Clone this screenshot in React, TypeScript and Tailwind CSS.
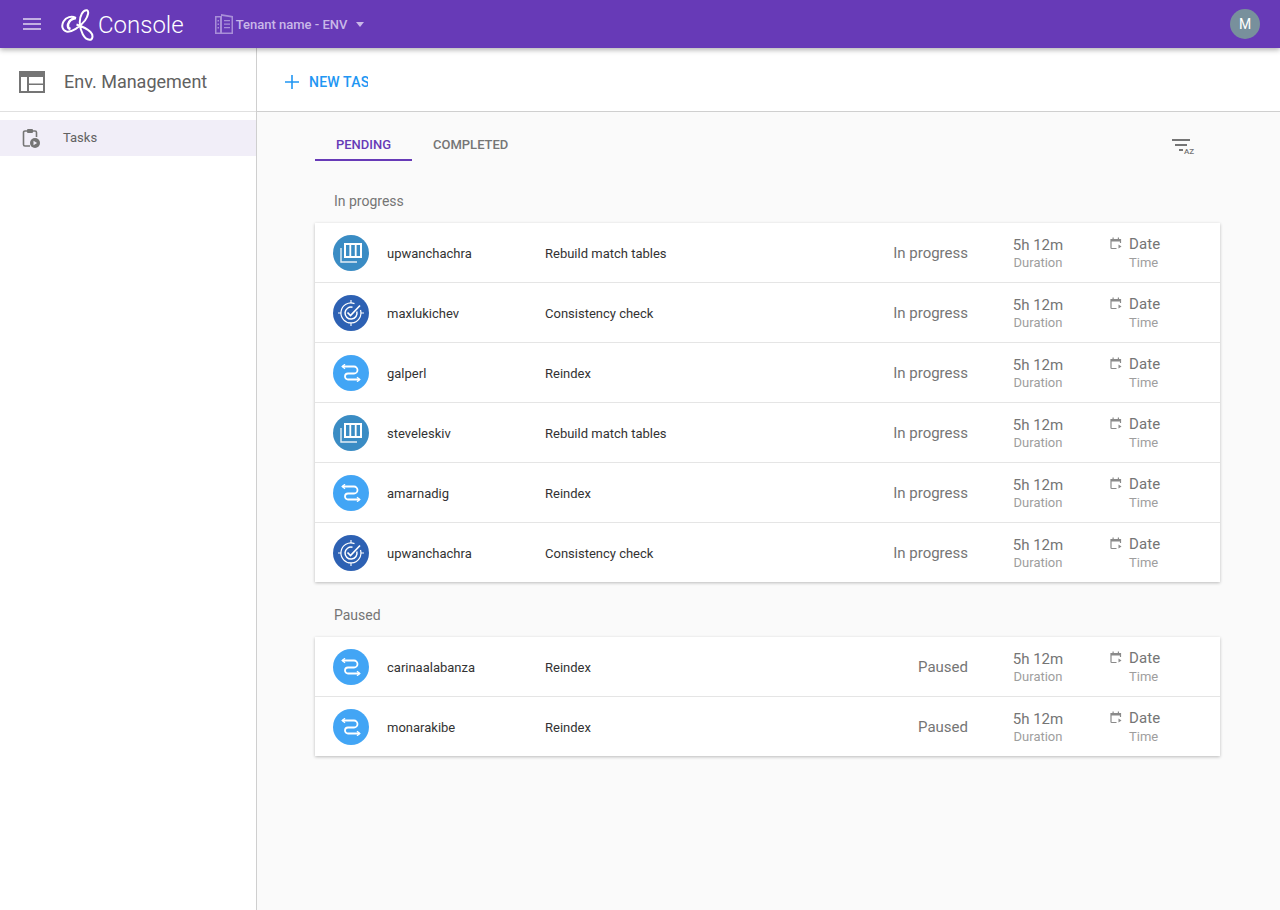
import React from "react";

const Menu = () => (
  <svg width="18" height="12" viewBox="0 0 18 12" className="text-[#c3b0e2]">
    <path d="M0 0h18v2H0zM0 5h18v2H0zM0 10h18v2H0z" fill="currentColor" />
  </svg>
);

const Logo = () => (
  <svg width="34" height="32" viewBox="0 0 34 32" fill="none" stroke="white" strokeWidth="2">
    <path d="M15 9C10.500 6.500 5 8 2.500 12.500C0 17 1.500 21.500 5.500 22.500C10.500 23.500 19 18 24 11.500C27.500 6.500 28 2 26 1.200C22 .5 18.500 7 18.800 14C19.200 22 23 30.500 28.500 30.800C32 30.800 32.500 26 29.500 23C26.500 20 20 17 15.500 15.500" />
    <path d="M15 9C11.500 9.500 8 11.500 7 15.500C6.500 18 7.500 19.500 9.500 20" strokeWidth="2.500" />
  </svg>
);

const Building = () => (
  <svg width="18" height="20" viewBox="0 0 18 20" className="text-[#a88ed8]">
    <path
      fill="currentColor"
      fillRule="evenodd"
      d="M0 2h6V0l12 2v18H0zM1.500 3.500v15H5v-15zM7 2v16.500h9.500V3.500zM2.500 6H4v1.500H2.500zM2.500 9.500H4V11H2.500zM2.500 13H4v1.500H2.500zM9 6h6v1.200H9zM9 9.500h6v1.200H9zM9 13h6v1.200H9z"
    />
  </svg>
);

const Layout = () => (
  <svg width="26" height="22" viewBox="0 0 26 22">
    <path
      fill="#757575"
      fillRule="evenodd"
      d="M0 0h26v22H0zM2 6v14h6V6zM10 6v6.500h14V6zM10 14v6h14v-6z"
    />
  </svg>
);

const ClipboardPlay = () => (
  <svg width="18" height="20" viewBox="0 0 18 20" fill="none">
    <path
      d="M8 18H3a1.500 1.500 0 0 1-1.500-1.500V4.500A1.500 1.500 0 0 1 3 3h10a1.500 1.500 0 0 1 1.500 1.500V9"
      stroke="#757575"
      strokeWidth="1.600"
    />
    <rect x="5" y="1" width="6" height="4" rx="1" fill="#757575" />
    <circle cx="13" cy="15" r="5" fill="#757575" />
    <path d="M11.500 12.800v4.400l3.600-2.200z" fill="#f1eef8" />
  </svg>
);

const Plus = () => (
  <svg width="14" height="14" viewBox="0 0 14 14">
    <path d="M6.200 0h1.600v14H6.200zM0 6.200h14v1.600H0z" fill="#2196f3" />
  </svg>
);

const SortAz = () => (
  <div className="relative h-[18px] w-[24px]">
    <svg width="18" height="12" viewBox="0 0 18 12" className="absolute left-0 top-0">
      <path d="M0 0h18v2H0zM3 5h12v2H3zM7 10h4v2H7z" fill="#757575" />
    </svg>
    <span className="absolute left-[12px] top-[8px] text-[8px] font-medium leading-[10px] text-[#757575]">AZ</span>
  </div>
);

const CalendarPlay = () => (
  <svg width="12" height="13" viewBox="0 0 12 13" fill="none">
    <path d="M6.500 11.500H1.800a.800.800 0 0 1-.8-.8V2.500h9.500V6" stroke="#8a8a8a" strokeWidth="1.200" />
    <path d="M1 2h9.500v2.500H1zM2.500 .5h1.200v2H2.500zM7.800 .5H9v2H7.800z" fill="#8a8a8a" />
    <path d="M8.500 7.500v4l3-2z" fill="#8a8a8a" />
  </svg>
);

const RebuildIcon = () => (
  <svg width="22" height="20" viewBox="0 0 22 20" fill="none" stroke="white">
    <rect x="5" y="1" width="16" height="13" strokeWidth="2" />
    <path d="M10.300 1v13M15.700 1v13" strokeWidth="1.800" />
    <path d="M1 5v14h16" strokeWidth="1.400" opacity=".85" />
  </svg>
);

const CheckIcon = () => (
  <svg width="26" height="26" viewBox="0 0 26 26" fill="none" stroke="white">
    <path d="M16.500 3.600A10 10 0 1 0 22.500 10" strokeWidth="1.200" />
    <path d="M14.500 7.300A6 6 0 1 0 18.800 11.500" strokeWidth="1.500" />
    <path d="M9.500 12.500l3 3L22 5.500" strokeWidth="1.700" />
    <path d="M13 0v3M13 23v3M0 13h3M23 13h3" strokeWidth="1.100" />
  </svg>
);

const ReindexIcon = () => (
  <svg width="20" height="18" viewBox="0 0 20 18" fill="none" stroke="white" strokeWidth="1.800">
    <path d="M1.500 2.500H13a3.500 3.500 0 0 1 0 7H7a3 3 0 0 0 0 6h11.500" />
    <path d="M4 .3L1.300 2.500 4 4.700" strokeWidth="1.400" />
    <path d="M16 13.300l2.700 2.200-2.700 2.200" strokeWidth="1.400" />
  </svg>
);

type Kind = "rebuild" | "check" | "reindex";

const kinds: Record<Kind, { task: string; bg: string; icon: React.ReactNode }> = {
  rebuild: { task: "Rebuild match tables", bg: "bg-[#3a8cc4]", icon: <RebuildIcon /> },
  check: { task: "Consistency check", bg: "bg-[#2d61b3]", icon: <CheckIcon /> },
  reindex: { task: "Reindex", bg: "bg-[#42a5f5]", icon: <ReindexIcon /> },
};

const Row = ({ user, kind, status }: { user: string; kind: Kind; status: string }) => {
  const k = kinds[kind];
  return (
    <div className="flex h-[60px] items-center border-b border-[#e5e5e5] pl-[18px] last:h-[59px] last:border-b-0">
      <div className={`flex h-9 w-9 shrink-0 items-center justify-center rounded-full ${k.bg}`}>{k.icon}</div>
      <div className="ml-[18px] w-[158px] pt-[2px] text-[13px] leading-5 text-[#333]">{user}</div>
      <div className="w-[300px] pt-[2px] text-[13px] leading-5 text-[#333]">{k.task}</div>
      <div className="w-[123px] text-right text-[15px] leading-5 text-[#757575]">{status}</div>
      <div className="ml-[20px] flex w-[100px] flex-col items-center">
        <span className="text-[15px] leading-5 text-[#757575]">5h 12m</span>
        <span className="text-[13px] leading-4 text-[#9e9e9e]">Duration</span>
      </div>
      <div className="ml-[22px] flex flex-col">
        <div className="flex items-center">
          <span className="mb-[1px] flex"><CalendarPlay /></span>
          <span className="ml-[7px] text-[15px] leading-5 tracking-[0.1px] text-[#757575]">Date</span>
        </div>
        <span className="ml-[19px] text-[13px] leading-[18px] text-[#9e9e9e]">Time</span>
      </div>
    </div>
  );
};

export default function App() {
  return (
    <div className="flex h-[910px] w-[1280px] flex-col overflow-hidden bg-[#fafafa] font-['Roboto',sans-serif]">
      <header className="relative z-10 flex h-12 shrink-0 items-center bg-[#673ab7] shadow-[0_2px_5px_rgba(0,0,0,0.3)]">
        <div className="ml-[23px] flex"><Menu /></div>
        <div className="ml-[20px] mt-[1px] flex w-[36px]"><Logo /></div>
        <span className="ml-[1px] mt-[2px] text-[24px] font-light leading-8 text-white">Console</span>
        <div className="ml-[31px] flex items-center"><Building /></div>
        <span className="ml-[3px] mt-[2px] text-[13px] font-medium text-[#c9b8e8]">Tenant name - ENV</span>
        <span className="ml-[9px] h-0 w-0 border-x-[4.500px] border-t-[5px] border-x-transparent border-t-[#c9b8e8]" />
        <div className="ml-auto mr-[20px] flex h-[30px] w-[30px] items-center justify-center rounded-full bg-[#78909c] text-sm text-white">M</div>
      </header>
      <div className="flex min-h-0 flex-1">
        <aside className="w-[257px] shrink-0 border-r border-[#cfcfcf] bg-white">
          <div className="flex h-[64px] items-center border-b border-[#e0e0e0] pl-[19px] pt-1">
            <Layout />
            <span className="ml-[19px] text-[18px] leading-6 text-[#616161]">Env. Management</span>
          </div>
          <div className="mt-2 flex h-9 items-center bg-[#f1eef8] pl-[22px]">
            <ClipboardPlay />
            <span className="ml-[23px] text-[13px] text-[#616161]">Tasks</span>
          </div>
        </aside>
        <main className="flex min-w-0 flex-1 flex-col">
          <div className="flex h-[64px] shrink-0 items-center border-b border-[#cfcfcf] bg-white pl-[28px] pt-1">
            <Plus />
            <div className="ml-[10px] w-[59px] overflow-hidden whitespace-nowrap text-sm font-medium leading-5 tracking-[0.2px] text-[#2196f3]">NEW TASK</div>
          </div>
          <div className="pl-[58px] pr-[60px]">
            <div className="flex h-[49px] items-end justify-between">
              <div className="flex text-[13px] font-medium leading-4">
                <div className="flex h-[33px] w-[97px] items-center justify-center border-b-2 border-[#673ab7] pt-[3px] text-[#673ab7]">PENDING</div>
                <div className="flex h-[33px] items-center pb-[1px] pl-[21px] pt-[1px] text-[#757575]">COMPLETED</div>
              </div>
              <div className="mb-[4px] mr-[24px]"><SortAz /></div>
            </div>
            <div className="mb-[12px] ml-[19px] mt-[30px] text-sm leading-5 text-[#757575]">In progress</div>
            <div className="bg-white shadow-[0_1px_3px_rgba(0,0,0,0.25)]">
              <Row user="upwanchachra" kind="rebuild" status="In progress" />
              <Row user="maxlukichev" kind="check" status="In progress" />
              <Row user="galperl" kind="reindex" status="In progress" />
              <Row user="steveleskiv" kind="rebuild" status="In progress" />
              <Row user="amarnadig" kind="reindex" status="In progress" />
              <Row user="upwanchachra" kind="check" status="In progress" />
            </div>
            <div className="mb-[12px] ml-[19px] mt-[23px] text-sm leading-5 text-[#757575]">Paused</div>
            <div className="bg-white shadow-[0_1px_3px_rgba(0,0,0,0.25)]">
              <Row user="carinaalabanza" kind="reindex" status="Paused" />
              <Row user="monarakibe" kind="reindex" status="Paused" />
            </div>
          </div>
        </main>
      </div>
    </div>
  );
}
